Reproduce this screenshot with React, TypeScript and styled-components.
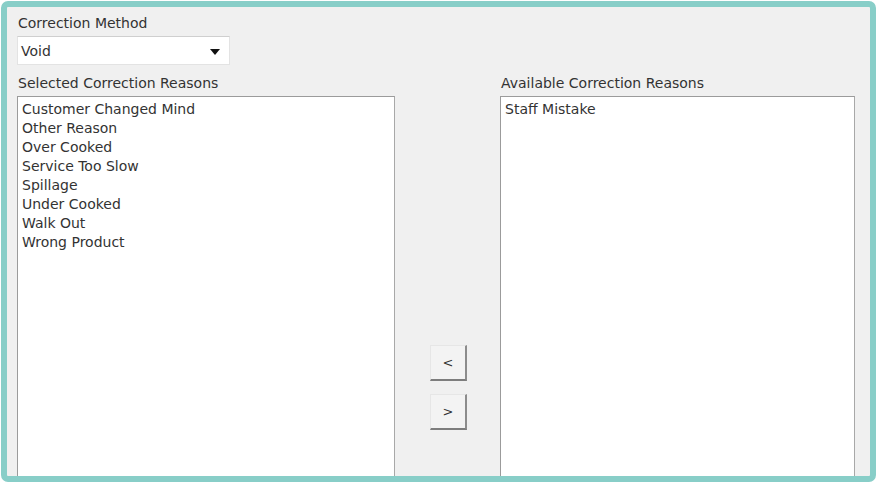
import React from "react";
import styled, { createGlobalStyle } from "styled-components";

const Global = createGlobalStyle`
  html, body { margin: 0; padding: 0; background: #ffffff; }
  body { width: 877px; height: 482px; overflow: hidden; }
  #root { width: 877px; height: 482px; }
`;

const Outer = styled.div`
  box-sizing: border-box;
  width: 877px;
  height: 482px;
  padding: 1px 1px 0 1px;
`;

const Frame = styled.div`
  box-sizing: border-box;
  width: 100%;
  height: 100%;
  border: 6px solid #88cec8;
  border-radius: 7px;
  background: #f0f0f0;
  overflow: hidden;
  display: flex;
  flex-direction: column;
  padding: 7px 14px 0 10px;
  font-family: "DejaVu Sans", Tahoma, sans-serif;
  font-size: 14px;
  color: #333333;
`;

const Label = styled.div`
  height: 18px;
  line-height: 18px;
  padding-left: 1px;
  white-space: nowrap;
`;

const Combo = styled.div`
  box-sizing: border-box;
  margin-top: 4px;
  width: 213px;
  height: 29px;
  background: #ffffff;
  border: 1px solid #e3e3e3;
  border-top-color: #cfcfcf;
  display: flex;
  align-items: center;
  justify-content: space-between;
  padding: 0 9px 0 3px;
`;

const Arrow = styled.div`
  width: 0;
  height: 0;
  border-left: 5px solid transparent;
  border-right: 5px solid transparent;
  border-top: 6px solid #111;
  margin-top: 2px;
`;

const Columns = styled.div`
  flex: 1;
  display: flex;
  margin-top: 9px;
  min-height: 0;
`;

const ListColumn = styled.div<{ $w: number }>`
  width: ${(p) => p.$w}px;
  display: flex;
  flex-direction: column;
`;

const ListBox = styled.div`
  box-sizing: border-box;
  flex: 1;
  margin-top: 4px;
  margin-bottom: -2px;
  background: #ffffff;
  border: 1px solid #9b9b9b;
  border-right-color: #a8a8a8;
  padding: 3px 0 0 4px;
`;

const Item = styled.div`
  height: 19px;
  line-height: 19px;
  white-space: nowrap;
`;

const Middle = styled.div`
  width: 105px;
  display: flex;
  flex-direction: column;
  align-items: center;
  padding-top: 271px;
  gap: 13px;
`;

const MoveButton = styled.div`
  box-sizing: border-box;
  width: 37px;
  height: 36px;
  margin-left: 2px;
  background: #f3f3f3;
  border-top: 1px solid #e6e6e6;
  border-left: 1px solid #e6e6e6;
  border-right: 2px solid #8c8c8c;
  border-bottom: 2px solid #7d7d7d;
  display: flex;
  align-items: center;
  justify-content: center;
  font-size: 13px;
  color: #333;
`;

const selected = [
  "Customer Changed Mind",
  "Other Reason",
  "Over Cooked",
  "Service Too Slow",
  "Spillage",
  "Under Cooked",
  "Walk Out",
  "Wrong Product",
];

const available = ["Staff Mistake"];

export default function App() {
  return (
    <>
      <Global />
      <Outer>
        <Frame>
          <Label>Correction Method</Label>
          <Combo>
            <span>Void</span>
            <Arrow />
          </Combo>
          <Columns>
            <ListColumn $w={378}>
              <Label>Selected Correction Reasons</Label>
              <ListBox>
                {selected.map((s) => (
                  <Item key={s}>{s}</Item>
                ))}
              </ListBox>
            </ListColumn>
            <Middle>
              <MoveButton>&lt;</MoveButton>
              <MoveButton>&gt;</MoveButton>
            </Middle>
            <ListColumn $w={355}>
              <Label>Available Correction Reasons</Label>
              <ListBox>
                {available.map((s) => (
                  <Item key={s}>{s}</Item>
                ))}
              </ListBox>
            </ListColumn>
          </Columns>
        </Frame>
      </Outer>
    </>
  );
}
